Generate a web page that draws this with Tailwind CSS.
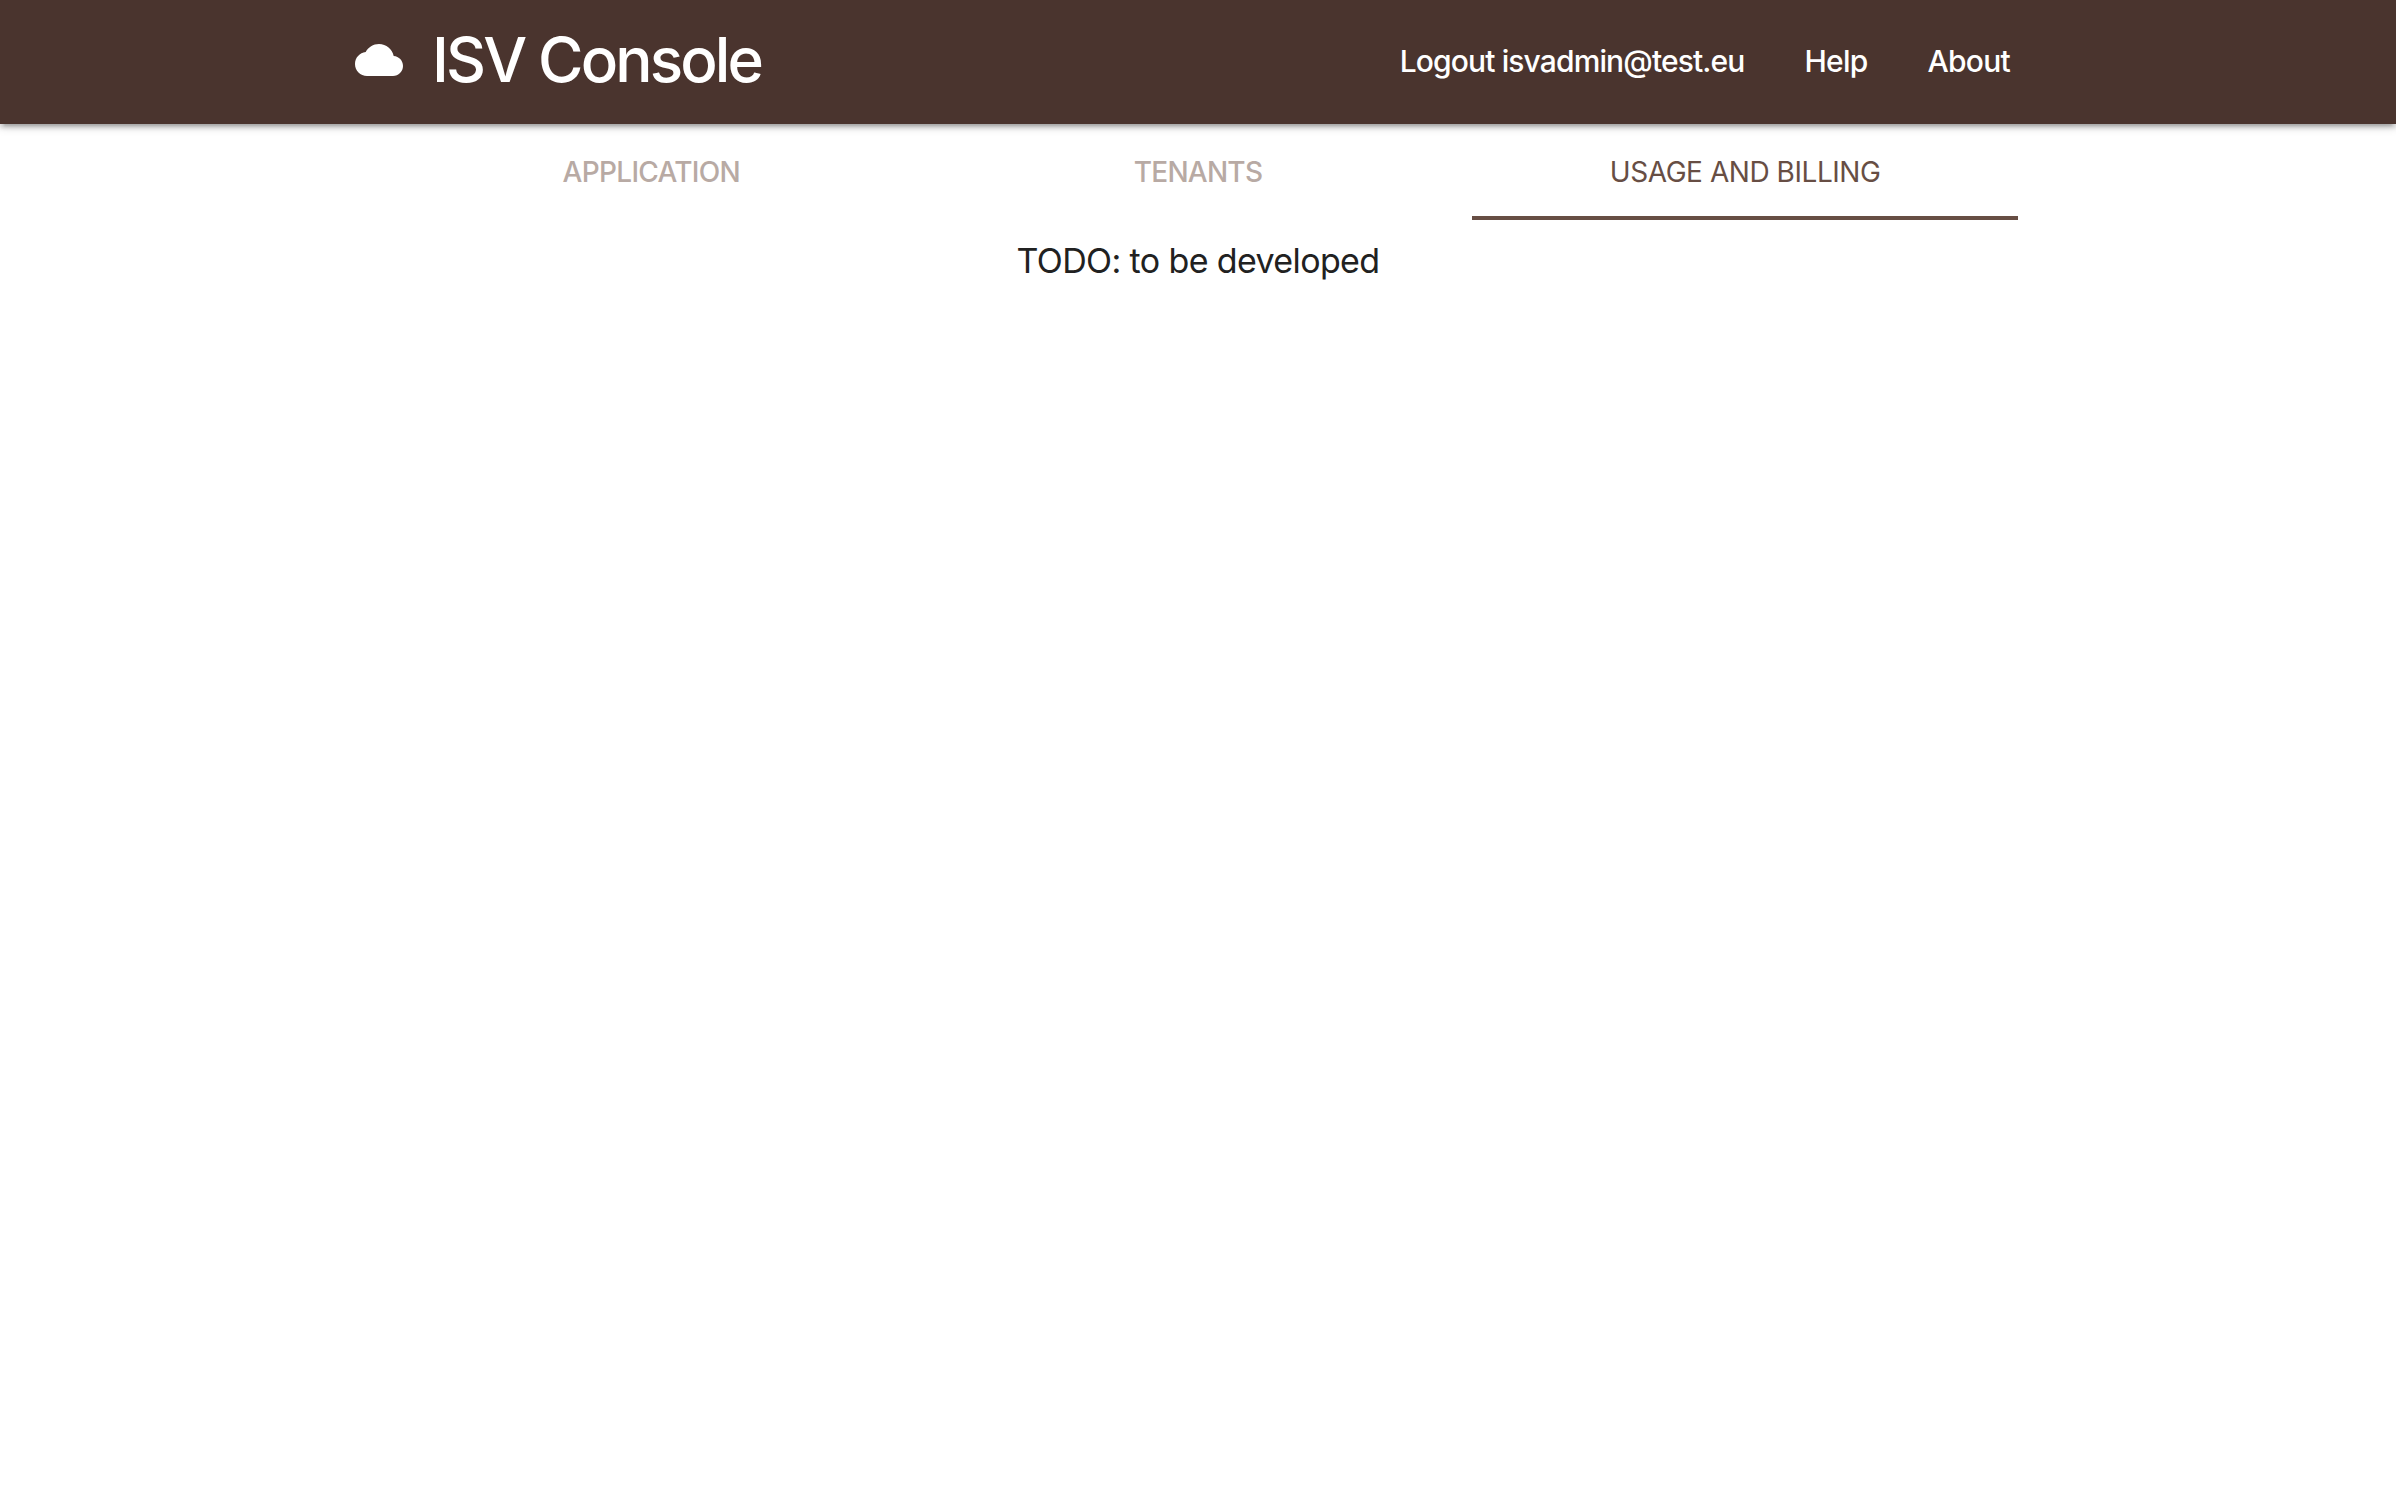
<!DOCTYPE html>
<html lang="en"><head><meta charset="utf-8"><title>ISV Console</title>
<script src="https://cdn.jsdelivr.net/npm/@tailwindcss/browser@4"></script></head>
<body class="min-h-screen bg-white font-[Inter,sans-serif] text-[#212121]">
<nav class="h-[124px] bg-[#4a342e] shadow-[0_4px_4px_0_rgba(0,0,0,0.14),0_6px_2px_-4px_rgba(0,0,0,0.12),0_2px_10px_0_rgba(0,0,0,0.2)] text-white">
<div class="mx-auto flex h-full w-[1686px] items-center justify-between">
<a class="flex items-center gap-[29px] pb-1 whitespace-nowrap"><svg class="h-[48px] w-[48px]" viewBox="0 0 24 24" fill="currentColor"><path d="M19.35 10.04C18.67 6.59 15.64 4 12 4 9.11 4 6.6 5.64 5.35 8.04 2.34 8.36 0 10.91 0 14c0 3.31 2.69 6 6 6h13c2.76 0 5-2.24 5-5 0-2.64-2.05-4.78-4.65-4.96z"/></svg><span class="text-[62px] leading-none font-[450] tracking-[-2.85px]">ISV Console</span></a>
<ul class="flex gap-[60px] pr-[31px] pb-0.5 text-[30px] font-[450] tracking-[-0.75px] whitespace-nowrap"><li class="tracking-[-0.87px]">Logout isvadmin@test.eu</li><li>Help</li><li>About</li></ul>
</div></nav>
<main class="mx-auto w-[1640px]">
<div class="grid h-24 grid-cols-3 text-center text-[28px] leading-[96px] font-[450] text-[#b8aaa4]"><a class="tracking-[-0.7px]">APPLICATION</a><a class="tracking-[-0.75px]">TENANTS</a><a class="ml-px h-24 border-b-4 font-normal tracking-[-0.45px] text-[#674e44]">USAGE AND BILLING</a></div>
<p class="pt-4 text-center text-[34px] leading-[50px] font-normal tracking-[-0.62px]">TODO: to be developed</p>
</main></body></html>
